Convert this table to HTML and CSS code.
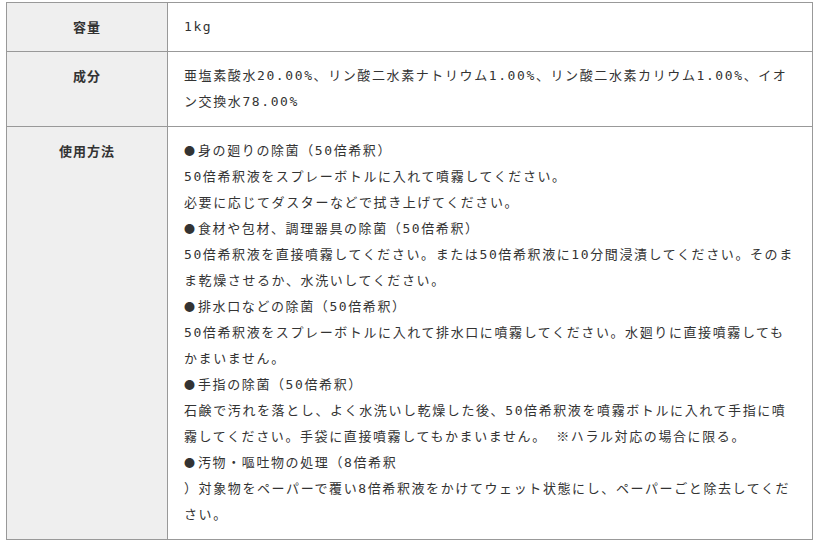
FILE: index.html
```html
<!DOCTYPE html>
<html lang="ja">
<head>
    <meta charset="UTF-8">
    <meta name="viewport" content="width=device-width, initial-scale=1.0">
    <title>商品仕様</title>
    <link rel="stylesheet" href="styles.css">
</head>
<body>
    <table class="spec">
      <tbody>
        <tr>
          <th>容量</th>
          <td>1kg</td>
        </tr>
        <tr>
          <th>成分</th>
          <td>亜塩素酸水20.00%、リン酸二水素ナトリウム1.00%、リン酸二水素カリウム1.00%、イオン交換水78.00%</td>
        </tr>
        <tr>
          <th>使用方法</th>
          <td><span class="mark">●</span>身の廻りの除菌（50倍希釈）<br>
50倍希釈液をスプレーボトルに入れて噴霧してください。<br>
必要に応じてダスターなどで拭き上げてください。<br>
<span class="mark">●</span>食材や包材、調理器具の除菌（50倍希釈）<br>
50倍希釈液を直接噴霧してください。または50倍希釈液に10分間浸漬してください。そのまま乾燥させるか、水洗いしてください。<br>
<span class="mark">●</span>排水口などの除菌（50倍希釈）<br>
50倍希釈液をスプレーボトルに入れて排水口に噴霧してください。水廻りに直接噴霧してもかまいません。<br>
<span class="mark">●</span>手指の除菌（50倍希釈）<br>
石鹸で汚れを落とし、よく水洗いし乾燥した後、50倍希釈液を噴霧ボトルに入れて手指に噴霧してください。手袋に直接噴霧してもかまいません。 ※ハラル対応の場合に限る。<br>
<span class="mark">●</span>汚物・嘔吐物の処理（8倍希釈<br>
）対象物をペーパーで覆い8倍希釈液をかけてウェット状態にし、ペーパーごと除去してください。</td>
        </tr>
      </tbody>
    </table>
</body>
</html>
```

FILE: styles.css
```css
/* Reset */
* {
  box-sizing: border-box;
  margin: 0;
  padding: 0;
}

body {
  font-family: "Noto Sans CJK JP", "Noto Sans", sans-serif;
  font-size: 13px;
  color: #333;
  background-color: #fff;
  padding: 2px 8px 0 6px;
}

/* Spec table */
.spec {
  width: 807px;
  border-collapse: collapse;
  border: 1px solid #999;
}

.spec th,
.spec td {
  border: 1px solid #999;
  padding: 11px 16px;
  line-height: 26px;
  vertical-align: top;
}

.spec th {
  width: 161px;
  background-color: #efefef;
  font-weight: bold;
  text-align: center;
  letter-spacing: 1px;
}

/* half-width digits in the source are monospaced */
.spec td {
  font-family: "DejaVu Sans Mono", "Noto Sans CJK JP", monospace;
  text-align: left;
  letter-spacing: 1.6px;
}

/* bullet keeps the full-width Japanese glyph, a bit smaller */
.spec .mark {
  font-family: "Noto Sans CJK JP", sans-serif;
  font-size: 11px;
  line-height: 1;
  letter-spacing: 3px;
}
```
